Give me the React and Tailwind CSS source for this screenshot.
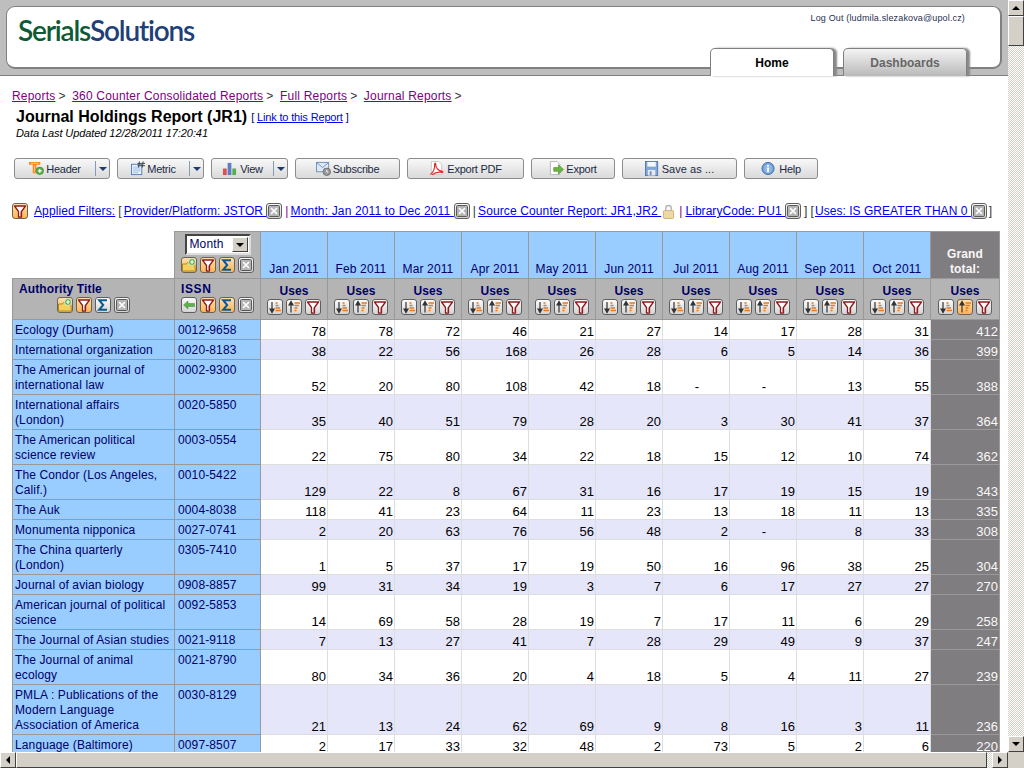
import React from "react";

const FONT = "font-['Liberation_Sans',Arial,sans-serif]";

function Glyph({ kind }) {
  switch (kind) {
    case "filter":
      return (
        <>
          <path d="M1.500 2h11L8.500 7.500V13h-3V7.500z" fill="#fff" stroke="#8c1c1c" strokeWidth="1.300" strokeLinejoin="round" />
          <path d="M7.500 7.500V12.500" stroke="#c98a8a" strokeWidth="1" />
        </>
      );
    case "sigma":
      return <path d="M11 2.200H3.200L7.200 7l-4 4.800H11" fill="none" stroke="#0b5c8c" strokeWidth="2" />;
    case "close":
      return (
        <>
          <rect x="1.500" y="1.500" width="11" height="11" rx="1" fill="#b4b4b4" stroke="#5a5a5a" />
          <path d="M4 4l6 6M10 4l-6 6" stroke="#fff" strokeWidth="1.700" />
        </>
      );
    case "folder":
      return (
        <>
          <path d="M.5 13V6h4l1-1.500h7l1 8.500z" fill="#f4d060" stroke="#b08a20" />
          <circle cx="10" cy="4" r="3.400" fill="#55a84a" stroke="#fff" strokeWidth=".7" />
          <path d="M8 4h4M10 2v4" stroke="#fff" strokeWidth="1.200" />
        </>
      );
    case "back":
      return <path d="M1.500 7L6 3v2.500h6.500v3H6V11z" fill="#5faf4e" stroke="#3c8a36" strokeWidth=".5" />;
    case "asc":
      return (
        <>
          <path d="M4 2v9M2 9l2 3.500L6 9z" stroke="#333" strokeWidth="1.200" fill="#333" />
          <path d="M7.500 3h2M7.500 5.500h3M7.500 8h4.500M7.500 10.500h5.500" stroke="#e07a20" strokeWidth="1.300" />
        </>
      );
    case "desc":
      return (
        <>
          <path d="M4 12.500V3.500M2 5l2-3.500L6 5z" stroke="#333" strokeWidth="1.200" fill="#333" />
          <path d="M7.500 3h5.500M7.500 5.500h4.500M7.500 8h3M7.500 10.500h2" stroke="#e07a20" strokeWidth="1.300" />
        </>
      );
    default:
      return null;
  }
}

function IconBtn({ kind, on }) {
  const bg = on
    ? "bg-gradient-to-b from-[#ffe0a8] to-[#ffb552] border-[#6e6250]"
    : "bg-gradient-to-b from-[#fbfbfb] to-[#d4d4d4] border-[#5e5e5e]";
  return (
    <span className={`inline-block shrink-0 w-[16px] h-[16px] rounded-[3px] border ${bg}`}>
      <svg viewBox="0 0 14 14" className="w-[14px] h-[14px] block">
        <Glyph kind={kind} />
      </svg>
    </span>
  );
}

function Icons({ list }) {
  return (
    <div className="flex justify-center gap-[3px]">
      {list.map(([k, on], i) => (
        <IconBtn key={i} kind={k} on={on} />
      ))}
    </div>
  );
}

function ToolIcon({ kind }) {
  const cls = "w-[15px] h-[15px] shrink-0";
  if (kind === "header")
    return (
      <svg viewBox="0 0 16 16" className={cls}>
        <path d="M0 1h12v3H8v9H4V4H0z" fill="#f28c1e" />
        <path d="M2 2.500h8M6 5v7" stroke="#ffd9a0" strokeWidth=".8" />
        <circle cx="11.500" cy="10.500" r="4" fill="#5cae4c" stroke="#2f7a2c" strokeWidth=".6" />
        <path d="M9.500 10.500h4M11.500 8.500v4" stroke="#fff" strokeWidth="1.200" />
      </svg>
    );
  if (kind === "metric")
    return (
      <svg viewBox="0 0 16 16" className={cls}>
        <rect x=".5" y="3.500" width="11" height="11" fill="#eaf2fb" stroke="#4d7fb5" />
        <path d="M2 6.500h8M2 8.500h8M2 10.500h8M2 12.500h6" stroke="#7fa6d0" strokeWidth=".7" />
        <path d="M9 .5L8 7M13 .5L12 7M7 2.500h8M7 5h8" stroke="#333" strokeWidth=".9" fill="none" />
      </svg>
    );
  if (kind === "view")
    return (
      <svg viewBox="0 0 16 16" className={cls}>
        <rect x="1" y="8" width="4" height="7" fill="#d9534f" />
        <rect x="6" y="2" width="4" height="13" fill="#5a7fc8" />
        <rect x="11" y="8" width="4" height="7" fill="#5cae4c" />
      </svg>
    );
  if (kind === "mail")
    return (
      <svg viewBox="0 0 16 16" className={cls}>
        <rect x=".5" y="1.500" width="13" height="10" fill="#dfe9f6" stroke="#6f8fb8" />
        <path d="M.5 1.500L7 7l6.500-5.500" fill="none" stroke="#6f8fb8" />
        <circle cx="11.500" cy="11.500" r="4" fill="#9a9a9a" stroke="#555" strokeWidth=".7" />
        <path d="M11.500 9.500v2l1.500.8" stroke="#fff" strokeWidth="1" fill="none" />
      </svg>
    );
  if (kind === "pdf")
    return (
      <svg viewBox="0 0 16 16" className={cls}>
        <path d="M2.500.5h8l3 3v11h-11z" fill="#fff" stroke="#c9c9c9" />
        <path d="M1.500 14.500c3-2 5-7 4.500-11-.2-1.500 1.300-1.500 1.200 0-.3 4 3 7 7 7.500 1 .2 .8 1.200 -.2 1.100-4-.7-7.500 -.2-10.500 2.600" fill="none" stroke="#d8322a" strokeWidth="1.300" />
      </svg>
    );
  if (kind === "export")
    return (
      <svg viewBox="0 0 16 16" className={cls}>
        <path d="M1.500 .5h7l3 3v11h-10z" fill="#fff" stroke="#b5b5b5" />
        <path d="M5 7h5V4l5.500 5-5.500 5v-3H5z" fill="#6cb33f" stroke="#3f8a2a" strokeWidth=".6" />
      </svg>
    );
  if (kind === "save")
    return (
      <svg viewBox="0 0 16 16" className={cls}>
        <rect x=".5" y=".5" width="13" height="15" fill="#7ea6dc" stroke="#5378ad" />
        <rect x="2.500" y="1" width="9" height="5" fill="#f4f7fb" />
        <rect x="3" y="9.500" width="8" height="6" fill="#e8e8e8" />
        <rect x="5" y="11" width="2" height="4" fill="#6c8fbf" />
      </svg>
    );
  return (
    <svg viewBox="0 0 16 16" className={cls}>
      <circle cx="7.500" cy="8" r="6.500" fill="#6d9ed6" stroke="#4473ad" />
      <circle cx="7.500" cy="8" r="4.500" fill="#8fb8e6" />
      <rect x="6.500" y="7" width="2" height="5" fill="#fff" />
      <rect x="6.500" y="4" width="2" height="2" fill="#fff" />
    </svg>
  );
}

function ToolBtn({ w, icon, label, menu, gap }) {
  return (
    <div
      className={`${w} h-[21px] rounded-[3px] border border-[#8c8c8c] bg-gradient-to-b from-[#f8f8f8] to-[#dadada] flex items-center text-[11px] tracking-[-0.25px] text-[#1c2a44] shrink-0`}
    >
      <div className="flex-1 flex items-center justify-center">
        <ToolIcon kind={icon} />
        <span className={`${gap} pt-[1px]`}>{label}</span>
      </div>
      {menu && (
        <div className="w-[14px] h-[15px] border-l border-[#7f9db9] flex items-center justify-center">
          <span className="w-0 h-0 border-x-[4px] border-x-transparent border-t-[4px] border-t-[#1d3a6e]" />
        </div>
      )}
    </div>
  );
}

function Arrow({ dir }) {
  const shape = {
    up: "border-x-[4px] border-x-transparent border-b-[4px] border-b-black",
    down: "border-x-[4px] border-x-transparent border-t-[4px] border-t-black",
    left: "border-y-[4px] border-y-transparent border-r-[4px] border-r-black",
    right: "border-y-[4px] border-y-transparent border-l-[4px] border-l-black",
  }[dir];
  return (
    <div className="w-[16px] h-[16px] shrink-0 bg-[#d4d0c8] border border-t-white border-l-white border-r-[#404040] border-b-[#404040] flex items-center justify-center">
      <span className={`w-0 h-0 ${shape}`} />
    </div>
  );
}

const MONTHS = ["Jan", "Feb", "Mar", "Apr", "May", "Jun", "Jul", "Aug", "Sep", "Oct"];

const ROWS = [
  ["Ecology (Durham)", "0012-9658", [78, 78, 72, 46, 21, 27, 14, 17, 28, 31], 412, 1],
  ["International organization", "0020-8183", [38, 22, 56, 168, 26, 28, 6, 5, 14, 36], 399, 1],
  ["The American journal of international law", "0002-9300", [52, 20, 80, 108, 42, 18, "-", "-", 13, 55], 388, 2],
  ["International affairs\n(London)", "0020-5850", [35, 40, 51, 79, 28, 20, 3, 30, 41, 37], 364, 2],
  ["The American political science review", "0003-0554", [22, 75, 80, 34, 22, 18, 15, 12, 10, 74], 362, 2],
  ["The Condor (Los Angeles, Calif.)", "0010-5422", [129, 22, 8, 67, 31, 16, 17, 19, 15, 19], 343, 2],
  ["The Auk", "0004-8038", [118, 41, 23, 64, 11, 23, 13, 18, 11, 13], 335, 1],
  ["Monumenta nipponica", "0027-0741", [2, 20, 63, 76, 56, 48, 2, "-", 8, 33], 308, 1],
  ["The China quarterly\n(London)", "0305-7410", [1, 5, 37, 17, 19, 50, 16, 96, 38, 25], 304, 2],
  ["Journal of avian biology", "0908-8857", [99, 31, 34, 19, 3, 7, 6, 17, 27, 27], 270, 1],
  ["American journal of political science", "0092-5853", [14, 69, 58, 28, 19, 7, 17, 11, 6, 29], 258, 2],
  ["The Journal of Asian studies", "0021-9118", [7, 13, 27, 41, 7, 28, 29, 49, 9, 37], 247, 1],
  ["The Journal of animal ecology", "0021-8790", [80, 34, 36, 20, 4, 18, 5, 4, 11, 27], 239, 2],
  ["PMLA : Publications of the Modern Language Association of America", "0030-8129", [21, 13, 24, 62, 69, 9, 8, 16, 3, 11], 236, 3],
  ["Language (Baltimore)", "0097-8507", [2, 17, 33, 32, 48, 2, 73, 5, 2, 6], 220, 1],
];

const HEIGHT = { 1: "h-[20px]", 2: "h-[35px]", 3: "h-[50px]" };

function Link({ children, purple }) {
  return <a className={`underline ${purple ? "text-[#800080]" : "text-[#0000ee]"}`}>{children}</a>;
}

function Crumb({ children }) {
  return (
    <>
      <Link purple>{children}</Link>
      <span className="ml-[3px] mr-[6.5px]">&gt;</span>
    </>
  );
}

function ReportTable() {
  return (
    <table className="table-fixed border-collapse w-[987px] ml-[12px] mt-[11px] text-[12px] leading-[15px] tracking-[0.12px]">
      <colgroup>
        <col className="w-[162px]" />
        <col className="w-[86px]" />
        {MONTHS.map((m) => (
          <col key={m} className="w-[67px]" />
        ))}
        <col className="w-[69px]" />
      </colgroup>
      <thead>
        <tr className="h-[47px]">
          <th className="p-0" />
          <th className="p-0 bg-[#b4b4b4] border border-[#999] align-top">
            <div className="flex flex-col items-center pt-[2px]">
              <div className="w-[66px] h-[21px] bg-white border-2 border-[#444] border-r-[#ddd] border-b-[#ddd] flex items-center justify-between pl-[3px] pr-[1px] font-normal text-[12px] text-[#000066]">
                <span>Month</span>
                <span className="w-[16px] h-[15px] bg-[#d4d0c8] border border-t-white border-l-white border-r-[#404040] border-b-[#404040] flex items-center justify-center">
                  <span className="w-0 h-0 border-x-[4px] border-x-transparent border-t-[4px] border-t-black" />
                </span>
              </div>
              <div className="mt-[2px]">
                <Icons list={[["folder", true], ["filter", true], ["sigma", true], ["close"]]} />
              </div>
            </div>
          </th>
          {MONTHS.map((m) => (
            <th key={m} className="p-0 pb-[1px] bg-[#99ccff] border border-[#999] align-bottom font-normal text-[#000066] text-center">
              {m} 2011
            </th>
          ))}
          <th className="p-0 pb-[1px] bg-[#807d80] border border-[#999] align-bottom font-bold text-[#f8f8f8] text-center">
            Grand total:
          </th>
        </tr>
        <tr className="h-[41px]">
          <th className="p-0 pt-[3px] bg-[#b4b4b4] border border-[#999] align-top text-left font-bold text-[#000066]">
            <div className="pl-[6px]">Authority Title</div>
            <Icons list={[["folder", true], ["filter", true], ["sigma"], ["close"]]} />
          </th>
          <th className="p-0 pt-[3px] bg-[#b4b4b4] border border-[#999] align-top text-left font-bold text-[#000066]">
            <div className="pl-[6px] tracking-[0.6px]">ISSN</div>
            <Icons list={[["back"], ["filter", true], ["sigma", true], ["close"]]} />
          </th>
          {MONTHS.map((m) => (
            <th key={m} className="p-0 pt-[5px] bg-[#b4b4b4] border border-[#999] align-top font-bold text-[#000066]">
              <div>Uses</div>
              <Icons list={[["asc"], ["desc"], ["filter"]]} />
            </th>
          ))}
          <th className="p-0 pt-[5px] bg-[#b4b4b4] border border-[#999] align-top font-bold text-[#000066]">
            <div>Uses</div>
            <Icons list={[["asc"], ["desc", true], ["filter"]]} />
          </th>
        </tr>
      </thead>
      <tbody>
        {ROWS.map(([title, issn, vals, total, lines], i) => (
          <tr key={title} className={`${HEIGHT[lines]} ${i % 2 ? "bg-[#e6e6fa]" : "bg-white"}`}>
            <td className="p-0 px-[2px] pt-[3px] align-top whitespace-pre-line bg-[#99ccff] border border-[#999] text-[#000066]">{title}</td>
            <td className="p-0 pl-[3px] pt-[3px] align-top bg-[#99ccff] border border-[#999] text-[#000066]">{issn}</td>
            {vals.map((v, j) => (
              <td
                key={j}
                className={`p-0 align-bottom text-right text-[13px] leading-[15px] tracking-normal text-black border border-[#dddddd] ${v === "-" ? "pr-[30px]" : "pr-[1px]"}`}
              >
                {v}
              </td>
            ))}
            <td className="p-0 pr-[1px] align-bottom text-right text-[13px] leading-[15px] tracking-normal text-[#f8f8f8] bg-[#807d80] border border-[#999]">
              {total}
            </td>
          </tr>
        ))}
      </tbody>
    </table>
  );
}

export default function App() {
  const X = () => <IconBtn kind="close" />;
  return (
    <div className={`${FONT} w-[1024px] h-[768px] overflow-hidden flex flex-col bg-white`}>
      <div className="flex flex-1 min-h-0">
        <main className="flex-1 min-w-0 overflow-hidden">
          <header className="relative h-[76px] bg-[#bebebe] border-b border-[#808080] pt-[6px] pl-[6px] pr-[6px]">
            <div className="h-[63px] bg-white border-2 border-[#808080] border-t border-l rounded-[9px] flex justify-between pl-[11px] pr-[35px]">
              <div className="font-['Lato',sans-serif] text-[28px] leading-none tracking-[-1.2px] mt-[9px] font-semibold">
                <span className="text-[#0d5a35]">Serials</span>
                <span className="text-[#1f3f78]">Solutions</span>
              </div>
              <div className="text-[9px] tracking-[0.15px] text-[#1f2f4f] mt-[5px]">Log Out (ludmila.slezakova@upol.cz)</div>
            </div>
            <div className="absolute left-[710px] top-[48px] flex gap-[9px]">
              <div className="w-[124px] h-[28px] bg-white border border-b-0 border-[#808080] rounded-t-[5px] flex items-center justify-center text-[12px] font-bold text-black shadow-[3px_0_2px_#888]">
                Home
              </div>
              <div className="w-[124px] h-[28px] bg-gradient-to-b from-[#f4f4f4] to-[#b9b9b9] border border-b-0 border-[#808080] rounded-t-[5px] flex items-center justify-center text-[12px] font-bold text-[#666] shadow-[3px_0_2px_#888]">
                Dashboards
              </div>
            </div>
          </header>

          <nav className="pl-[12px] mt-[13px] text-[12px] leading-[15px] tracking-[0.2px] text-[#333]">
            <Crumb>Reports</Crumb>
            <Crumb>360 Counter Consolidated Reports</Crumb>
            <Crumb>Full Reports</Crumb>
            <Crumb>Journal Reports</Crumb>
          </nav>
          <div className="pl-[16px] mt-[3px] flex items-center">
            <h1 className="text-[16px] leading-[20px] font-bold text-black">Journal Holdings Report (JR1)</h1>
            <span className="ml-[4px] text-[11px] tracking-[-0.15px] text-[#000066]">
              [ <Link>Link to this Report</Link> ]
            </span>
          </div>
          <div className="pl-[16px] text-[11px] tracking-[-0.08px] leading-[12px] italic text-black">Data Last Updated 12/28/2011 17:20:41</div>

          <div className="flex gap-[7px] pl-[14px] mt-[19px]">
            <ToolBtn w="w-[96px]" icon="header" label="Header" menu gap="ml-[2px]" />
            <ToolBtn w="w-[87px]" icon="metric" label="Metric" menu gap="ml-[1px]" />
            <ToolBtn w="w-[77px]" icon="view" label="View" menu gap="ml-[3px]" />
            <ToolBtn w="w-[105px]" icon="mail" label="Subscribe" gap="ml-[2px]" />
            <ToolBtn w="w-[117px]" icon="pdf" label="Export PDF" gap="ml-[3px]" />
            <ToolBtn w="w-[84px]" icon="export" label="Export" gap="ml-[2px]" />
            <ToolBtn w="w-[115px]" icon="save" label="Save as ..." gap="ml-[2px] tracking-[0.05px]" />
            <ToolBtn w="w-[74px]" icon="help" label="Help" gap="ml-[3px]" />
          </div>

          <div className="flex items-center pl-[12px] mt-[23px] h-[18px] text-[12px] tracking-[0.12px] whitespace-nowrap text-[#333]">
            <IconBtn kind="filter" on />
            <span className="ml-[6px]">
              <Link>Applied Filters:</Link>
            </span>
            <span className="ml-[3px]">[</span>
            <span className="ml-[2px] tracking-[0.03px]">
              <Link>Provider/Platform: JSTOR&nbsp;</Link>
            </span>
            <X />
            <span className="ml-[3px] mr-[2px] text-[#800080]">|</span>
            <span className="tracking-[0.15px]">
              <Link>Month: Jan 2011 to Dec 2011&nbsp;</Link>
            </span>
            <X />
            <span className="ml-[3px] mr-[2px] text-[#333]">|</span>
            <Link>Source Counter Report: JR1,JR2&nbsp;</Link>
            <svg viewBox="0 0 14 16" className="w-[13px] h-[15px] ml-[1px] shrink-0">
              <rect x="1.500" y="7" width="11" height="8.500" rx="1" fill="#eed9a6" stroke="#c9b078" />
              <path d="M4 7V4.500a3 3 0 0 1 6 0V7" fill="none" stroke="#b5b5b5" strokeWidth="1.500" />
            </svg>
            <span className="ml-[4px] mr-[3px] text-[#800080]">|</span>
            <span className="tracking-[0.05px]">
              <Link>LibraryCode: PU1&nbsp;</Link>
            </span>
            <X />
            <span className="ml-[3px]">]</span>
            <span className="ml-[3px]">[</span>
            <span className="ml-[1px] tracking-[0.04px]">
              <Link>Uses: IS GREATER THAN 0&nbsp;</Link>
            </span>
            <X />
            <span className="ml-[2px]">]</span>
          </div>

          <ReportTable />
        </main>

        <aside className="w-[16px] flex flex-col">
          <Arrow dir="up" />
          <div className="h-[30px] bg-[#d4d0c8] border border-t-white border-l-white border-r-[#404040] border-b-[#404040]" />
          <div className="flex-1 bg-[repeating-conic-gradient(#d4d0c8_0_25%,#fff_0_50%)] bg-[length:2px_2px]" />
          <Arrow dir="down" />
        </aside>
      </div>
      <div className="h-[16px] flex shrink-0">
        <Arrow dir="left" />
        <div className="w-[971px] bg-[#d4d0c8] border border-t-white border-l-white border-r-[#404040] border-b-[#404040]" />
        <div className="flex-1 bg-[repeating-conic-gradient(#d4d0c8_0_25%,#fff_0_50%)] bg-[length:2px_2px]" />
        <Arrow dir="right" />
        <div className="w-[16px] bg-[#d4d0c8]" />
      </div>
    </div>
  );
}
